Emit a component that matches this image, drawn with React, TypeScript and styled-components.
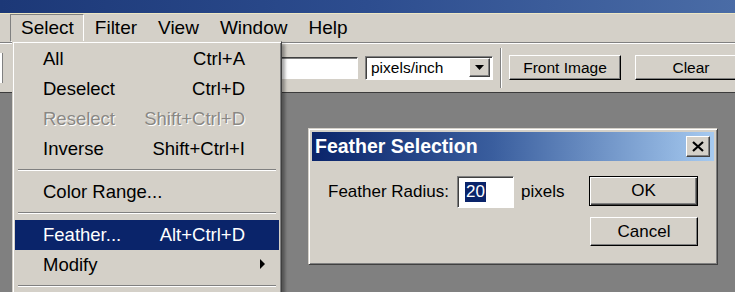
import styled, { createGlobalStyle } from "styled-components";

const GlobalStyle = createGlobalStyle`
  html, body {
    margin: 0;
    padding: 0;
    background: #808080;
  }
  * {
    box-sizing: border-box;
  }
`;

const FONT = `"Liberation Sans", Arial, sans-serif`;
const FACE = "#d4d0c8";
const SELECTED = "#0a246a";

const Screen = styled.div`
  position: relative;
  width: 735px;
  height: 292px;
  overflow: hidden;
  display: flex;
  flex-direction: column;
  font-family: ${FONT};
  color: #000;
  background: #808080;
`;

const AppTitle = styled.div`
  height: 14px;
  flex: none;
  background: linear-gradient(90deg, #1c3877 0%, #2d4d8f 50%, #4a6ca6 100%);
  border-bottom: 1px solid #ece6c4;
`;

const MenuBar = styled.div`
  height: 28px;
  flex: none;
  display: flex;
  align-items: stretch;
  padding-left: 10px;
  background: ${FACE};
`;

const MenuTitle = styled.div<{ $open?: boolean }>`
  display: flex;
  align-items: center;
  padding: 0 9px 0 10px;
  font-size: 19px;
  border: 1px solid transparent;
  border-color: ${(p) =>
    p.$open ? "#808080 #fff #fff #808080" : "transparent"};
`;

const Toolbar = styled.div`
  height: 51px;
  flex: none;
  display: flex;
  align-items: center;
  gap: 7px;
  background: ${FACE};
  border-top: 1px solid #808080;
  box-shadow: inset 0 1px 0 #fff;
  border-bottom: 1px solid #3c3c3c;

  & > * {
    flex: none;
  }
`;

const EdgeField = styled.div`
  width: 3px;
  height: 30px;
  margin-right: 226px;
  background: #fff;
  border-right: 1px solid #808080;
`;

const TextField = styled.div`
  width: 122px;
  height: 22px;
  background: #fff;
  border: 1px solid;
  border-color: #404040 #fff #fff #404040;
  box-shadow: inset 1px 1px 0 #808080;
`;

const Combo = styled.div`
  width: 128px;
  height: 24px;
  display: flex;
  align-items: center;
  justify-content: space-between;
  padding: 1px 2px 1px 5px;
  background: #fff;
  border: 1px solid;
  border-color: #808080 #fff #fff #808080;
  box-shadow: inset 1px 1px 0 #404040;
  font-size: 15.5px;
`;

const ComboArrow = styled.div`
  width: 21px;
  height: 19px;
  display: flex;
  align-items: center;
  justify-content: center;
  background: ${FACE};
  border: 1px solid;
  border-color: #fff #404040 #404040 #fff;
  box-shadow: inset -1px -1px 0 #808080;
`;

const ToolSep = styled.div`
  width: 2px;
  height: 40px;
  border-left: 1px solid #808080;
  border-right: 1px solid #fff;
`;

const Button = styled.div<{
  $width: number;
  $height?: number;
  $size?: number;
  $default?: boolean;
  $gap?: number;
}>`
  width: ${(p) => p.$width}px;
  height: ${(p) => p.$height ?? 25}px;
  margin-left: ${(p) => p.$gap ?? 0}px;
  flex: none;
  display: flex;
  align-items: center;
  justify-content: center;
  font-size: ${(p) => p.$size ?? 15.5}px;
  background: ${FACE};
  border: 1px solid;
  border-color: ${(p) => (p.$default ? "#000" : "#fff #000 #000 #fff")};
  box-shadow: ${(p) =>
    p.$default
      ? "inset 1px 1px 0 #fff, inset -1px -1px 0 #404040, inset -2px -2px 0 #808080"
      : "inset -1px -1px 0 #808080"};
`;

const Workspace = styled.div`
  flex: 1;
  background: #808080;
`;

/* dropdown of the Select menu */
const Dropdown = styled.div`
  position: absolute;
  left: 12px;
  top: 41px;
  width: 270px;
  padding: 2px 2px 20px 2px;
  background: ${FACE};
  border: 1px solid;
  border-color: ${FACE} #404040 #404040 ${FACE};
  box-shadow: inset 1px 1px 0 #fff, inset -1px -1px 0 #808080,
    3px 3px 3px rgba(0, 0, 0, 0.35);
  font-size: 18.5px;
`;

const Item = styled.div<{ $active?: boolean; $disabled?: boolean }>`
  height: 30px;
  display: flex;
  align-items: center;
  padding: 0 34px 0 28px;
  background: ${(p) => (p.$active ? SELECTED : "transparent")};
  color: ${(p) => (p.$active ? "#fff" : p.$disabled ? "#8a8884" : "#000")};
  text-shadow: ${(p) => (p.$disabled ? "1px 1px 0 #fff" : "none")};
  position: relative;
`;

const ItemLabel = styled.span`
  flex: 1;
`;

const Shortcut = styled.span`
  white-space: nowrap;
`;

const SubArrow = styled.span`
  position: absolute;
  right: 14px;
  top: 9px;
  width: 0;
  height: 0;
  border-top: 5px solid transparent;
  border-bottom: 5px solid transparent;
  border-left: 5px solid #000;
`;

const MenuSep = styled.div`
  height: 2px;
  margin: 5px 3px 6px;
  border-top: 1px solid #808080;
  border-bottom: 1px solid #fff;
`;

/* Feather Selection dialog */
const Dialog = styled.div`
  position: absolute;
  left: 308px;
  top: 128px;
  width: 410px;
  height: 137px;
  padding: 3px;
  background: ${FACE};
  border: 1px solid;
  border-color: ${FACE} #404040 #404040 ${FACE};
  box-shadow: inset 1px 1px 0 #fff, inset -1px -1px 0 #808080;
`;

const Caption = styled.div`
  height: 29px;
  display: flex;
  align-items: center;
  justify-content: space-between;
  padding: 0 4px 0 3px;
  background: linear-gradient(90deg, #0a246a 0%, #3a5e9e 45%, #a6caf0 100%);
  color: #fff;
  font-weight: bold;
  font-size: 19.5px;
`;

const CloseBox = styled.div`
  width: 24px;
  height: 21px;
  display: flex;
  align-items: center;
  justify-content: center;
  background: ${FACE};
  border: 1px solid;
  border-color: #fff #404040 #404040 #fff;
  box-shadow: inset -1px -1px 0 #808080;
`;

const DialogBody = styled.div`
  display: flex;
  justify-content: space-between;
  padding: 15px 16px 0 16px;
`;

const Field = styled.div`
  display: flex;
  align-items: center;
  gap: 7px;
  height: 32px;
  font-size: 17px;
`;

const NumberBox = styled.div`
  width: 57px;
  height: 32px;
  margin-left: 1px;
  display: flex;
  align-items: center;
  padding-left: 7px;
  background: #fff;
  border: 1px solid;
  border-color: #808080 #fff #fff #808080;
  box-shadow: inset 1px 1px 0 #404040;
`;

const SelectedText = styled.span`
  background: ${SELECTED};
  color: #fff;
  padding: 0 1px;
  line-height: 20px;
  font-size: 17px;
`;

const ButtonColumn = styled.div`
  display: flex;
  flex-direction: column;
  align-items: flex-end;
  gap: 11px;
`;

const menuTitles = ["Select", "Filter", "View", "Window", "Help"];

export default function App() {
  return (
    <Screen>
      <GlobalStyle />
      <AppTitle />
      <MenuBar>
        {menuTitles.map((title, index) => (
          <MenuTitle key={title} $open={index === 0}>
            {title}
          </MenuTitle>
        ))}
      </MenuBar>
      <Toolbar>
        <EdgeField />
        <TextField />
        <Combo>
          <span>pixels/inch</span>
          <ComboArrow>
            <svg width="9" height="5" viewBox="0 0 9 5">
              <path d="M0 0h9L4.5 5z" fill="#000" />
            </svg>
          </ComboArrow>
        </Combo>
        <ToolSep />
        <Button $width={112}>Front Image</Button>
        <Button $width={112} $gap={7}>
          Clear
        </Button>
      </Toolbar>
      <Workspace />

      <Dropdown>
        <Item>
          <ItemLabel>All</ItemLabel>
          <Shortcut>Ctrl+A</Shortcut>
        </Item>
        <Item>
          <ItemLabel>Deselect</ItemLabel>
          <Shortcut>Ctrl+D</Shortcut>
        </Item>
        <Item $disabled>
          <ItemLabel>Reselect</ItemLabel>
          <Shortcut>Shift+Ctrl+D</Shortcut>
        </Item>
        <Item>
          <ItemLabel>Inverse</ItemLabel>
          <Shortcut>Shift+Ctrl+I</Shortcut>
        </Item>
        <MenuSep />
        <Item>
          <ItemLabel>Color Range...</ItemLabel>
        </Item>
        <MenuSep />
        <Item $active>
          <ItemLabel>Feather...</ItemLabel>
          <Shortcut>Alt+Ctrl+D</Shortcut>
        </Item>
        <Item>
          <ItemLabel>Modify</ItemLabel>
          <SubArrow />
        </Item>
        <MenuSep />
      </Dropdown>

      <Dialog>
        <Caption>
          <span>Feather Selection</span>
          <CloseBox>
            <svg width="12" height="11" viewBox="0 0 12 11">
              <path d="M1 1l10 9M11 1L1 10" stroke="#000" strokeWidth="2.2" />
            </svg>
          </CloseBox>
        </Caption>
        <DialogBody>
          <Field>
            <span>Feather Radius:</span>
            <NumberBox>
              <SelectedText>20</SelectedText>
            </NumberBox>
            <span>pixels</span>
          </Field>
          <ButtonColumn>
            <Button $width={109} $height={30} $size={17} $default>
              OK
            </Button>
            <Button $width={108} $height={29} $size={17}>
              Cancel
            </Button>
          </ButtonColumn>
        </DialogBody>
      </Dialog>
    </Screen>
  );
}
